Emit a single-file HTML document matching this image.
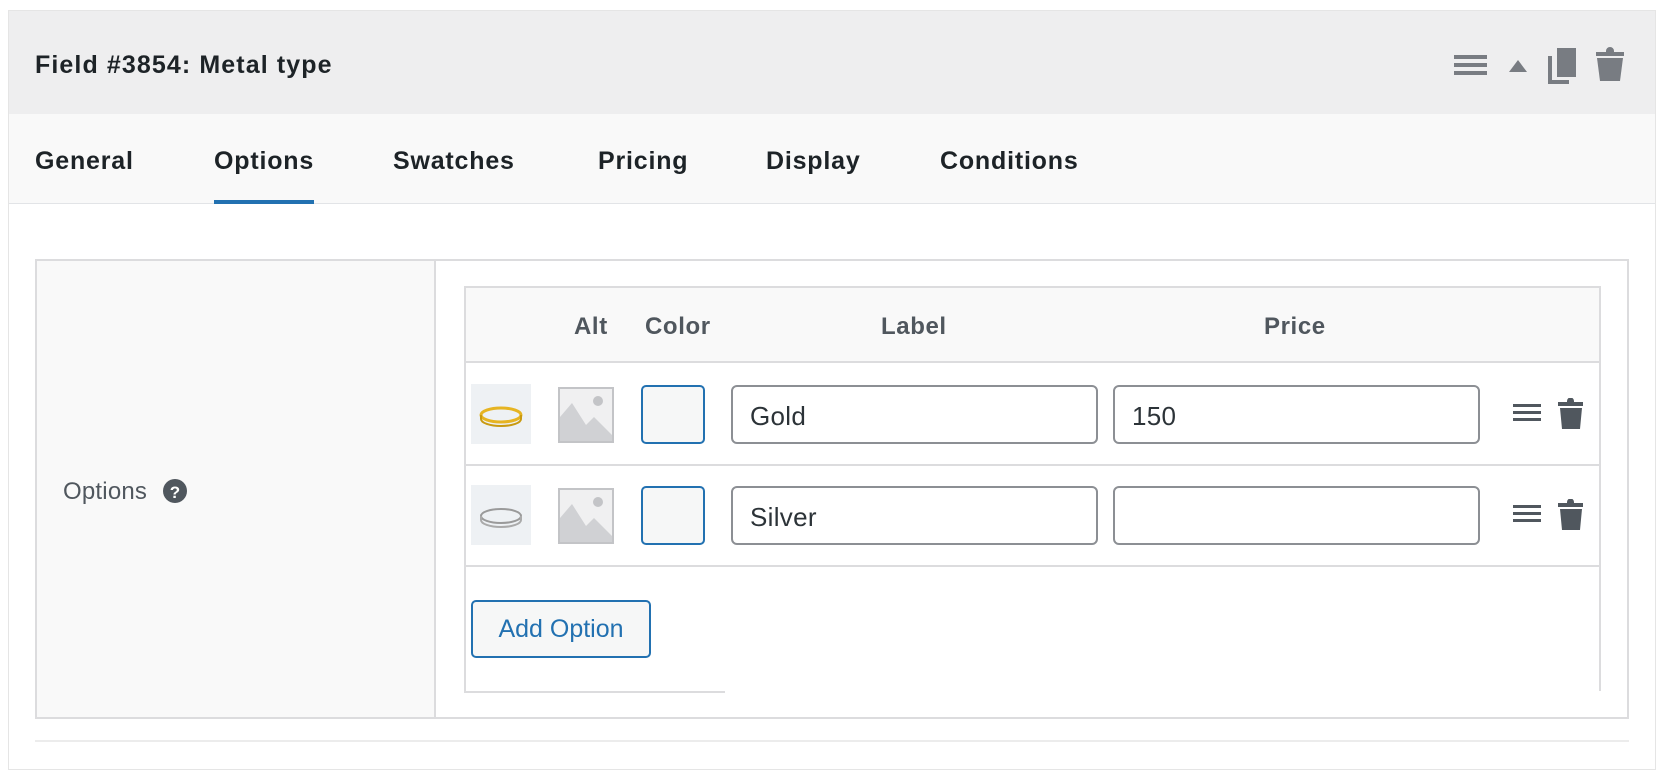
<!DOCTYPE html>
<html><head><meta charset="utf-8"><style>
*{box-sizing:border-box;margin:0;padding:0}
body{width:1676px;height:754px;background:#fff;font-family:"Liberation Sans",Arial,sans-serif;position:relative;overflow:hidden}
.a{position:absolute}
.panel{left:8px;top:10px;width:1648px;height:760px;border:1px solid #e5e5e5;background:#fff}
.hdr{left:9px;top:11px;width:1646px;height:103px;background:#eeeeef}
.title{left:35px;top:51px;font-size:25px;letter-spacing:1.1px;font-weight:bold;color:#1d2327}
.tabs{left:9px;top:114px;width:1646px;height:90px;background:#f9f9f9;border-bottom:1px solid #e2e4e7}
.tab{top:147px;font-size:25px;letter-spacing:0.8px;font-weight:bold;color:#1d2327}
.ul{left:214px;top:200px;width:100px;height:4px;background:#2271b1}
.box{left:35px;top:259px;width:1594px;height:460px;border:2px solid #dcdcde;background:#fff}
.lab{left:37px;top:261px;width:399px;height:456px;background:#f9f9f9;border-right:2px solid #dcdcde}
.inner{left:464px;top:286px;width:1137px;height:407px;border:2px solid #dcdcde;border-bottom:none;background:#fff}
.th{left:466px;top:288px;width:1133px;height:75px;background:#f9f9f9;border-bottom:2px solid #dcdcde}
.h{top:313px;font-size:24px;letter-spacing:0.6px;font-weight:bold;color:#50575e}
.rowl{left:466px;height:2px;width:1133px;background:#dcdcde}
.thumb{left:471px;width:60px;height:60px;background:#eef1f4}
.ph{left:558px;width:56px;height:56px}
.col{left:641px;width:64px;height:59px;border:2px solid #2271b1;border-radius:5px;background:#f6f7f7}
.inp{height:59px;border:2px solid #8c8f94;border-radius:6px;background:#fff;font-size:26px;letter-spacing:0.3px;color:#2c3338;padding:14px 0 0 17px}
.btn{left:471px;top:600px;width:180px;height:58px;border:2px solid #2271b1;border-radius:5px;background:#f6f7f7;color:#2271b1;font-size:25px;text-align:center;line-height:54px}
</style></head><body>
<div class="a panel"></div>
<div class="a hdr"></div>
<div class="a title">Field #3854: Metal type</div>
<svg class="a" style="left:1450px;top:46px" width="180" height="40" viewBox="0 0 180 40">
<g fill="#787c82">
<rect x="4" y="9" width="33" height="4"/><rect x="4" y="17" width="33" height="4"/><rect x="4" y="25" width="33" height="4"/>
<polygon points="68,14 77,26 59,26"/>
<rect x="107" y="2" width="19" height="29"/><path d="M98 10h4v24h17v4H98z"/>
<path d="M156 5a4 4 0 0 1 8 0v1h10v4h-28v-4h10z"/><path d="M147 12h26l-3 23h-20z"/>
</g></svg>
<div class="a tabs"></div>
<div class="a tab" style="left:35px">General</div>
<div class="a tab" style="left:214px">Options</div>
<div class="a tab" style="left:393px">Swatches</div>
<div class="a tab" style="left:598px">Pricing</div>
<div class="a tab" style="left:766px">Display</div>
<div class="a tab" style="left:940px">Conditions</div>
<div class="a ul"></div>
<div class="a box"></div>
<div class="a lab"></div>
<div class="a" style="left:63px;top:478px;font-size:24px;letter-spacing:0.2px;color:#50575e">Options</div>
<svg class="a" style="left:163px;top:479px" width="24" height="24"><circle cx="12" cy="12" r="12" fill="#50575e"/><text x="12" y="19" font-size="17" font-weight="bold" fill="#fff" text-anchor="middle" font-family="Liberation Sans">?</text></svg>
<div class="a inner"></div>
<div class="a" style="left:725px;top:691px;width:876px;height:4px;background:#fff"></div>
<div class="a" style="left:464px;top:691px;width:261px;height:2px;background:#dcdcde"></div>
<div class="a th"></div>
<div class="a h" style="left:574px">Alt</div>
<div class="a h" style="left:645px">Color</div>
<div class="a h" style="left:881px">Label</div>
<div class="a h" style="left:1264px">Price</div>
<div class="a rowl" style="top:464px"></div>
<div class="a rowl" style="top:565px"></div>

<div class="a thumb" style="top:384px"><svg width="60" height="60"><ellipse cx="30" cy="31" rx="20" ry="7" fill="none" stroke="#e6b422" stroke-width="3"/><path d="M10 31v4a20 7 0 0 0 40 0v-4" fill="none" stroke="#c99a10" stroke-width="2"/></svg></div>
<div class="a thumb" style="top:485px"><svg width="60" height="60"><ellipse cx="30" cy="31" rx="20" ry="7" fill="none" stroke="#9a9a9a" stroke-width="2"/><path d="M10 31v4a20 7 0 0 0 40 0v-4" fill="none" stroke="#aaa" stroke-width="2"/></svg></div>
<svg class="a ph" style="top:387px" viewBox="0 0 56 56"><rect x="1" y="1" width="54" height="54" fill="#f0f0f1" stroke="#c3c4c7" stroke-width="2"/><circle cx="40" cy="14" r="5" fill="#c3c4c7"/><path d="M2 54V30l12-14 14 22 8-8 18 18v6z" fill="#d0d1d4"/></svg>
<svg class="a ph" style="top:488px" viewBox="0 0 56 56"><rect x="1" y="1" width="54" height="54" fill="#f0f0f1" stroke="#c3c4c7" stroke-width="2"/><circle cx="40" cy="14" r="5" fill="#c3c4c7"/><path d="M2 54V30l12-14 14 22 8-8 18 18v6z" fill="#d0d1d4"/></svg>
<div class="a col" style="top:385px"></div>
<div class="a col" style="top:486px"></div>
<div class="a inp" style="left:731px;top:385px;width:367px">Gold</div>
<div class="a inp" style="left:1113px;top:385px;width:367px">150</div>
<div class="a inp" style="left:731px;top:486px;width:367px">Silver</div>
<div class="a inp" style="left:1113px;top:486px;width:367px"></div>
<svg class="a" style="left:1510px;top:398px" width="80" height="36"><g fill="#50575e"><rect x="3" y="6" width="28" height="3"/><rect x="3" y="13" width="28" height="3"/><rect x="3" y="20" width="28" height="3"/><path d="M57 3a3 3 0 0 1 7 0v1h9v4H48V4h9zM50 10h22l-2 21H52z"/></g></svg>
<svg class="a" style="left:1510px;top:499px" width="80" height="36"><g fill="#50575e"><rect x="3" y="6" width="28" height="3"/><rect x="3" y="13" width="28" height="3"/><rect x="3" y="20" width="28" height="3"/><path d="M57 3a3 3 0 0 1 7 0v1h9v4H48V4h9zM50 10h22l-2 21H52z"/></g></svg>
<div class="a btn">Add Option</div>
<div class="a" style="left:35px;top:740px;width:1594px;height:2px;background:#ececec"></div>
</body></html>
